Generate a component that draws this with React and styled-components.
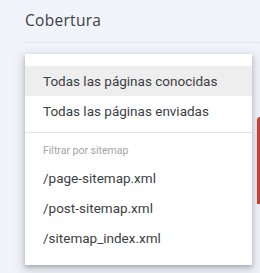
import React from "react";
import styled, { createGlobalStyle } from "styled-components";

const Global = createGlobalStyle`
  html, body { margin: 0; padding: 0; background: #f1f4fb; }
  body { font-family: Roboto, "Liberation Sans", sans-serif; }
`;

const Page = styled.div`
  position: relative;
  width: 260px;
  height: 273px;
  overflow: hidden;
  background: #f1f4fb;
`;

const Header = styled.div`
  padding: 9px 0 0 25px;
  height: 31px;
  box-sizing: border-box;
`;

const Title = styled.h1`
  margin: 0;
  font-family: "Open Sans", Roboto, sans-serif;
  font-size: 15.5px;
  line-height: 22px;
  font-weight: 500;
  color: #3c4043;
  letter-spacing: 0.3px;
`;

const Rule = styled.div`
  margin: 11px 0 0 22px;
  height: 1px;
  background: #e2e6ee;
`;

const Chart = styled.div`
  display: flex;
  justify-content: flex-end;
  padding-top: 74px;
`;

const Bar = styled.div`
  width: 3px;
  height: 87px;
  background: #d23f31;
  border-top-left-radius: 4px;
`;

const Menu = styled.ul`
  position: absolute;
  left: 25px;
  top: 54px;
  width: 227px;
  margin: 0;
  padding: 12px 0;
  list-style: none;
  background: #fff;
  box-shadow: 0 2px 4px rgba(60, 64, 67, 0.3), 0 4px 10px 3px rgba(60, 64, 67, 0.15);
`;

const Item = styled.li`
  height: 30px;
  display: flex;
  align-items: center;
  padding-left: 18px;
  font-size: 13.5px;
  color: #3c4043;
  background: ${(p) => (p.$active ? "#eeeeee" : "transparent")};
`;

const Divider = styled.li`
  height: 1px;
  margin: 6px 0 0;
  background: #e4e4e4;
`;

const Group = styled.li`
  height: 30px;
  display: flex;
  align-items: center;
  padding: 5px 0 0 18px;
  box-sizing: border-box;
  font-size: 10.5px;
  color: #a0a4a9;
`;

export default function App() {
  return (
    <>
      <Global />
      <Page>
        <Header>
          <Title>Cobertura</Title>
        </Header>
        <Rule />
        <Chart>
          <Bar />
        </Chart>
        <Menu>
          <Item $active>Todas las páginas conocidas</Item>
          <Item>Todas las páginas enviadas</Item>
          <Divider />
          <Group>Filtrar por sitemap</Group>
          <Item>/page-sitemap.xml</Item>
          <Item>/post-sitemap.xml</Item>
          <Item>/sitemap_index.xml</Item>
        </Menu>
      </Page>
    </>
  );
}
